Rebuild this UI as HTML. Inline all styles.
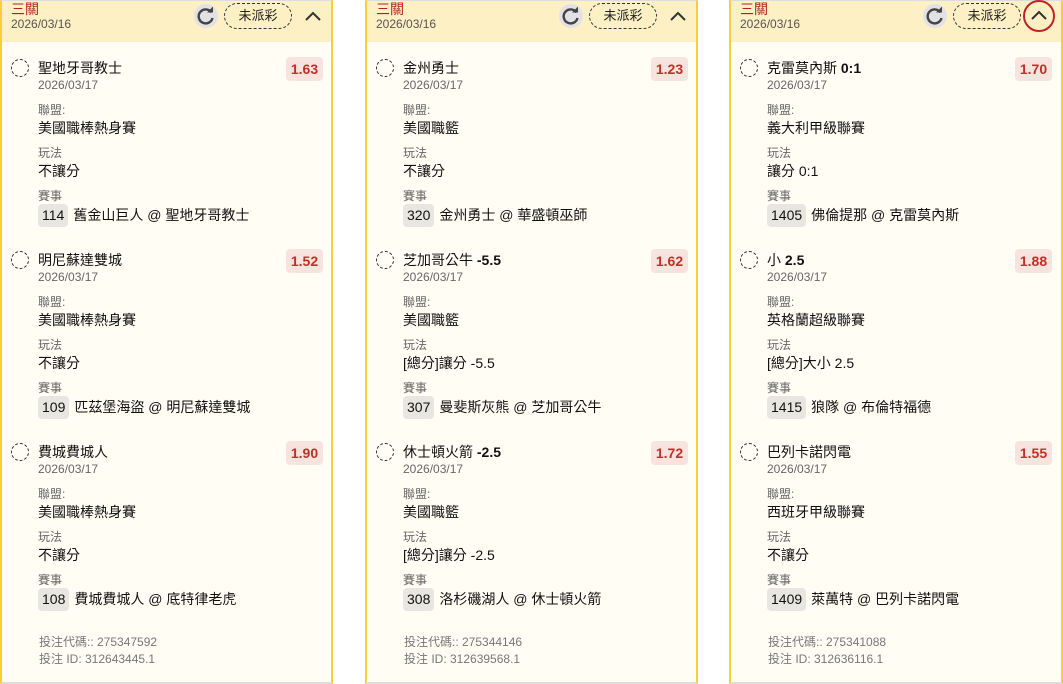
<!DOCTYPE html>
<html><head><meta charset="utf-8"><style>
*{margin:0;padding:0;box-sizing:border-box}
body{width:1063px;height:684px;overflow:hidden;background:#fff;font-family:"Liberation Sans","Noto Sans CJK TC",sans-serif;position:relative}
.col{position:absolute;top:0;width:333px;height:684px;border-left:2px solid #f6cf3a;border-right:2px solid #f6cf3a;border-top:1px solid #ddd;border-bottom:2px solid #ddd;background:#fffdf4}
.hd{position:absolute;left:0;right:0;top:0;height:41px;background:#fdf0c4}
.t3{position:absolute;left:9px;top:-2px;color:#b0221d;font-size:14px}
.hdate{position:absolute;left:9px;top:16px;color:#555;font-size:12px}
.ref{position:absolute;left:192px;top:3px;width:24px;height:24px;border-radius:50%;background:#e2e2e4}
.pill{position:absolute;left:222px;top:2px;width:68px;height:26px;border:1px dashed #333;border-radius:13px;font-size:13px;text-align:center;line-height:24px;color:#222}
.chev{position:absolute;left:296px;top:1px;width:30px;height:30px}
.sel{position:absolute;left:0;right:0}
.circ{position:absolute;left:9px;top:-1px;width:18px;height:18px;border:1px dashed #333;border-radius:50%}
.tt{position:absolute;left:36px;top:-2px;font-size:14px;color:#111}
.tt b{font-weight:bold}
.dt{position:absolute;left:36px;top:18px;font-size:12px;color:#666}
.lb{position:absolute;left:36px;font-size:12px;color:#666}
.vl{position:absolute;left:36px;font-size:14px;color:#111}
.odd{position:absolute;left:284px;top:-3px;width:37px;height:24px;background:#f8e4de;border-radius:4px;color:#c0302a;font-weight:bold;font-size:14px;text-align:center;line-height:24px}
.bd{display:inline-block;background:#e8e6e0;border-radius:4px;padding:0 4px;height:23px;line-height:23px;margin-right:5px}
.ft{position:absolute;font-size:12px;color:#777}
</style></head><body>
<div class="col" style="left:0">
<div class="hd"><div class="t3">三關</div><div class="hdate">2026/03/16</div>
<div class="ref"><svg width="24" height="24" viewBox="0 0 24 24"><path d="M17.5 8.5A7 7 0 1 0 18.5 14" fill="none" stroke="#444" stroke-width="2.4"/><path d="M13 8.5h6v-6z" fill="#444"/></svg></div>
<div class="pill">未派彩</div>
<svg class="chev" viewBox="0 0 30 30"><path d="M8 18l7-7 7 7" fill="none" stroke="#333" stroke-width="2"/></svg></div>
<div class="sel" style="top:59px"><div class="circ"></div><div class="tt">聖地牙哥教士</div><div class="dt">2026/03/17</div><div class="odd">1.63</div>
<div class="lb" style="top:41px">聯盟:</div><div class="vl" style="top:58px">美國職棒熱身賽</div>
<div class="lb" style="top:84px">玩法</div><div class="vl" style="top:101px">不讓分</div>
<div class="lb" style="top:127px">賽事</div><div class="vl" style="top:144px"><span class="bd">114</span>舊金山巨人 @ 聖地牙哥教士</div></div>
<div class="sel" style="top:251px"><div class="circ"></div><div class="tt">明尼蘇達雙城</div><div class="dt">2026/03/17</div><div class="odd">1.52</div>
<div class="lb" style="top:41px">聯盟:</div><div class="vl" style="top:58px">美國職棒熱身賽</div>
<div class="lb" style="top:84px">玩法</div><div class="vl" style="top:101px">不讓分</div>
<div class="lb" style="top:127px">賽事</div><div class="vl" style="top:144px"><span class="bd">109</span>匹茲堡海盜 @ 明尼蘇達雙城</div></div>
<div class="sel" style="top:443px"><div class="circ"></div><div class="tt">費城費城人</div><div class="dt">2026/03/17</div><div class="odd">1.90</div>
<div class="lb" style="top:41px">聯盟:</div><div class="vl" style="top:58px">美國職棒熱身賽</div>
<div class="lb" style="top:84px">玩法</div><div class="vl" style="top:101px">不讓分</div>
<div class="lb" style="top:127px">賽事</div><div class="vl" style="top:144px"><span class="bd">108</span>費城費城人 @ 底特律老虎</div></div>
<div class="ft" style="left:37px;top:632px">投注代碼:: 275347592</div><div class="ft" style="left:37px;top:649px">投注 ID: 312643445.1</div>
</div>

<div class="col" style="left:365px">
<div class="hd"><div class="t3">三關</div><div class="hdate">2026/03/16</div>
<div class="ref"><svg width="24" height="24" viewBox="0 0 24 24"><path d="M17.5 8.5A7 7 0 1 0 18.5 14" fill="none" stroke="#444" stroke-width="2.4"/><path d="M13 8.5h6v-6z" fill="#444"/></svg></div>
<div class="pill">未派彩</div>
<svg class="chev" viewBox="0 0 30 30"><path d="M8 18l7-7 7 7" fill="none" stroke="#333" stroke-width="2"/></svg></div>
<div class="sel" style="top:59px"><div class="circ"></div><div class="tt">金州勇士</div><div class="dt">2026/03/17</div><div class="odd">1.23</div>
<div class="lb" style="top:41px">聯盟:</div><div class="vl" style="top:58px">美國職籃</div>
<div class="lb" style="top:84px">玩法</div><div class="vl" style="top:101px">不讓分</div>
<div class="lb" style="top:127px">賽事</div><div class="vl" style="top:144px"><span class="bd">320</span>金州勇士 @ 華盛頓巫師</div></div>
<div class="sel" style="top:251px"><div class="circ"></div><div class="tt">芝加哥公牛 <b>-5.5</b></div><div class="dt">2026/03/17</div><div class="odd">1.62</div>
<div class="lb" style="top:41px">聯盟:</div><div class="vl" style="top:58px">美國職籃</div>
<div class="lb" style="top:84px">玩法</div><div class="vl" style="top:101px">[總分]讓分 -5.5</div>
<div class="lb" style="top:127px">賽事</div><div class="vl" style="top:144px"><span class="bd">307</span>曼斐斯灰熊 @ 芝加哥公牛</div></div>
<div class="sel" style="top:443px"><div class="circ"></div><div class="tt">休士頓火箭 <b>-2.5</b></div><div class="dt">2026/03/17</div><div class="odd">1.72</div>
<div class="lb" style="top:41px">聯盟:</div><div class="vl" style="top:58px">美國職籃</div>
<div class="lb" style="top:84px">玩法</div><div class="vl" style="top:101px">[總分]讓分 -2.5</div>
<div class="lb" style="top:127px">賽事</div><div class="vl" style="top:144px"><span class="bd">308</span>洛杉磯湖人 @ 休士頓火箭</div></div>
<div class="ft" style="left:37px;top:632px">投注代碼:: 275344146</div><div class="ft" style="left:37px;top:649px">投注 ID: 312639568.1</div>
</div>

<div class="col" style="left:729px;width:334px">
<div class="hd"><div class="t3">三關</div><div class="hdate">2026/03/16</div>
<div class="ref"><svg width="24" height="24" viewBox="0 0 24 24"><path d="M17.5 8.5A7 7 0 1 0 18.5 14" fill="none" stroke="#444" stroke-width="2.4"/><path d="M13 8.5h6v-6z" fill="#444"/></svg></div>
<div class="pill">未派彩</div>
<svg class="chev" style="left:291px;top:-2px;width:34px;height:34px" viewBox="0 0 34 34"><circle cx="17" cy="17" r="15" fill="none" stroke="#c0222a" stroke-width="2"/><path d="M10 20l7-7 7 7" fill="none" stroke="#333" stroke-width="2"/></svg></div>
<div class="sel" style="top:59px"><div class="circ"></div><div class="tt">克雷莫內斯 <b>0:1</b></div><div class="dt">2026/03/17</div><div class="odd">1.70</div>
<div class="lb" style="top:41px">聯盟:</div><div class="vl" style="top:58px">義大利甲級聯賽</div>
<div class="lb" style="top:84px">玩法</div><div class="vl" style="top:101px">讓分 0:1</div>
<div class="lb" style="top:127px">賽事</div><div class="vl" style="top:144px"><span class="bd">1405</span>佛倫提那 @ 克雷莫內斯</div></div>
<div class="sel" style="top:251px"><div class="circ"></div><div class="tt">小 <b>2.5</b></div><div class="dt">2026/03/17</div><div class="odd">1.88</div>
<div class="lb" style="top:41px">聯盟:</div><div class="vl" style="top:58px">英格蘭超級聯賽</div>
<div class="lb" style="top:84px">玩法</div><div class="vl" style="top:101px">[總分]大小 2.5</div>
<div class="lb" style="top:127px">賽事</div><div class="vl" style="top:144px"><span class="bd">1415</span>狼隊 @ 布倫特福德</div></div>
<div class="sel" style="top:443px"><div class="circ"></div><div class="tt">巴列卡諾閃電</div><div class="dt">2026/03/17</div><div class="odd">1.55</div>
<div class="lb" style="top:41px">聯盟:</div><div class="vl" style="top:58px">西班牙甲級聯賽</div>
<div class="lb" style="top:84px">玩法</div><div class="vl" style="top:101px">不讓分</div>
<div class="lb" style="top:127px">賽事</div><div class="vl" style="top:144px"><span class="bd">1409</span>萊萬特 @ 巴列卡諾閃電</div></div>
<div class="ft" style="left:37px;top:632px">投注代碼:: 275341088</div><div class="ft" style="left:37px;top:649px">投注 ID: 312636116.1</div>
</div>
</body></html>
